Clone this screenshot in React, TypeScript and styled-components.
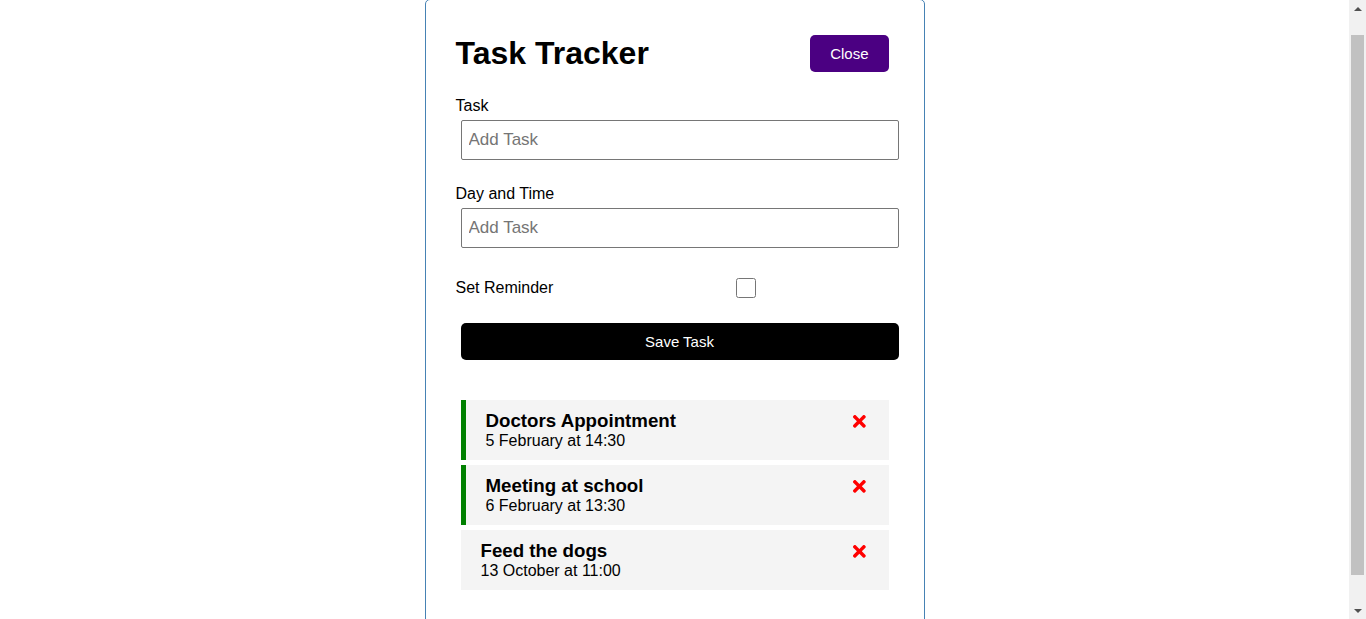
import React, { useLayoutEffect } from "react";
import styled, { createGlobalStyle } from "styled-components";
import { FaTimes } from "react-icons/fa";

const GlobalStyle = createGlobalStyle`
  * {
    box-sizing: border-box;
    margin: 0;
    padding: 0;
  }
  html, body {
    scrollbar-width: none;
  }
  body {
    font-family: "Liberation Sans", Arial, sans-serif;
    background: #fff;
    color: #000;
  }
  body::-webkit-scrollbar {
    display: none;
  }
`;

const Page = styled.div`
  padding-right: 17px;
`;

const Container = styled.div`
  max-width: 500px;
  margin: 30px auto 13px;
  overflow: auto;
  min-height: 300px;
  border: 1px solid steelblue;
  padding: 30px;
  border-radius: 5px;
`;

const Header = styled.header`
  display: flex;
  justify-content: space-between;
  align-items: center;
  margin-bottom: 20px;
`;

const Title = styled.h1`
  font-size: 32px;
  font-weight: bold;
`;

const Button = styled.button<{ $bg: string; $block?: boolean }>`
  display: ${(p) => (p.$block ? "block" : "inline-block")};
  width: ${(p) => (p.$block ? "100%" : "auto")};
  background: ${(p) => p.$bg};
  color: #fff;
  border: none;
  padding: 10px 20px;
  margin: 5px;
  border-radius: 5px;
  cursor: pointer;
  text-decoration: none;
  font-size: 15px;
  font-family: inherit;
  line-height: normal;
`;

const AddForm = styled.form`
  margin-bottom: 40px;
`;

const FormControl = styled.div`
  margin: 20px 0;
`;

const CheckControl = styled.div`
  margin: 20px 0;
  display: flex;
  align-items: center;
  justify-content: space-between;
`;

const Label = styled.label<{ $grow?: boolean }>`
  display: block;
  font-size: 16px;
  flex: ${(p) => (p.$grow ? 1 : "initial")};
`;

const TextInput = styled.input`
  width: 100%;
  height: 40px;
  margin: 5px;
  padding: 3px 7px;
  font-size: 17px;
  font-family: "Liberation Sans", Arial, sans-serif;
  border: 1px solid #767676;
  border-radius: 2px;
  &::placeholder {
    color: #757575;
  }
`;

const CheckInput = styled.input`
  flex: 2;
  height: 20px;
  margin: 5px;
`;

const TaskItem = styled.div<{ $reminder: boolean }>`
  background: #f4f4f4;
  margin: 5px;
  padding: 10px 20px;
  cursor: pointer;
  border-left: ${(p) => (p.$reminder ? "5px solid green" : "none")};
`;

const TaskTitle = styled.h3`
  display: flex;
  align-items: center;
  justify-content: space-between;
  font-size: 18.72px;
  font-weight: bold;
`;

const TaskDate = styled.p`
  font-size: 16px;
`;

/* Browser scrollbar as drawn in the reference */
const ScrollBar = styled.div`
  position: fixed;
  top: 0;
  right: 0;
  width: 17px;
  height: 100vh;
  background: #f1f1f1;
  display: flex;
  flex-direction: column;
`;

const ArrowButton = styled.div<{ $down?: boolean }>`
  height: 17px;
  display: flex;
  align-items: center;
  justify-content: center;
  &::after {
    content: "";
    width: 0;
    height: 0;
    border-left: 4px solid transparent;
    border-right: 4px solid transparent;
    ${(p) =>
      p.$down
        ? "border-top: 4px solid #505050;"
        : "border-bottom: 4px solid #505050;"}
  }
`;

const Track = styled.div`
  flex: 1;
  padding: 18px 2px 0;
`;

const Thumb = styled.div`
  height: 540px;
  background: #c1c1c1;
`;

const tasks = [
  { id: 1, text: "Doctors Appointment", day: "5 February at 14:30", reminder: true },
  { id: 2, text: "Meeting at school", day: "6 February at 13:30", reminder: true },
  { id: 3, text: "Feed the dogs", day: "13 October at 11:00", reminder: false },
];

export default function App() {
  useLayoutEffect(() => {
    window.scrollTo(0, 31);
  }, []);

  return (
    <>
      <GlobalStyle />
      <Page>
        <Container>
          <Header>
            <Title>Task Tracker</Title>
            <Button $bg="#4b0082">Close</Button>
          </Header>
          <AddForm onSubmit={(e) => e.preventDefault()}>
            <FormControl>
              <Label>Task</Label>
              <TextInput type="text" placeholder="Add Task" />
            </FormControl>
            <FormControl>
              <Label>Day and Time</Label>
              <TextInput type="text" placeholder="Add Task" />
            </FormControl>
            <CheckControl>
              <Label $grow>Set Reminder</Label>
              <CheckInput type="checkbox" />
            </CheckControl>
            <Button as="input" type="submit" value="Save Task" $bg="#000" $block />
          </AddForm>
          {tasks.map((t) => (
            <TaskItem key={t.id} $reminder={t.reminder}>
              <TaskTitle>
                {t.text}
                <FaTimes style={{ color: "red", cursor: "pointer" }} />
              </TaskTitle>
              <TaskDate>{t.day}</TaskDate>
            </TaskItem>
          ))}
        </Container>
      </Page>
      <ScrollBar>
        <ArrowButton />
        <Track>
          <Thumb />
        </Track>
        <ArrowButton $down />
      </ScrollBar>
    </>
  );
}
